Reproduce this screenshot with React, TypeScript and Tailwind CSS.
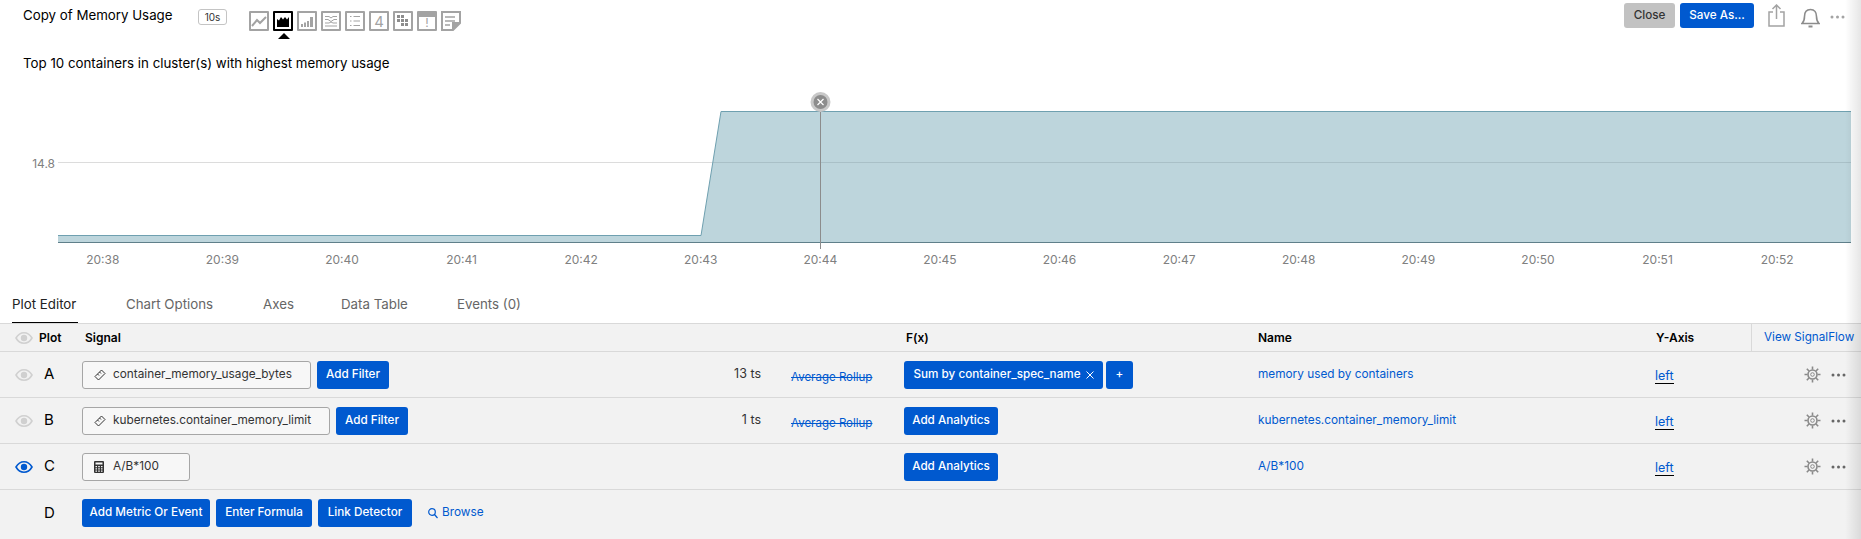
import { ReactNode } from "react";

const FONT = "font-['Inter','Liberation_Sans',sans-serif]";
const TIMES = ["20:38", "20:39", "20:40", "20:41", "20:42", "20:43", "20:44", "20:45", "20:46", "20:47", "20:48", "20:49", "20:50", "20:51", "20:52"];
const ROW_COLS = "grid grid-cols-[82px_679px_143px_354px_397px_96px_1fr] items-center";

function Btn({ children, className = "" }: { children: ReactNode; className?: string }) {
	return (
		<button className={`h-7 rounded-[3px] bg-[#0059cf] text-white text-[11.700px] font-medium whitespace-nowrap flex items-center justify-center ${className}`}>
			{children}
		</button>
	);
}

function ChartIcon({ children, active }: { children: ReactNode; active?: boolean }) {
	return (
		<div className={`w-5 h-5 border-2 rounded-[1px] flex items-center justify-center ${active ? "border-black" : "border-[#a3a3a3]"}`}>
			{children}
		</div>
	);
}

function ChartTypes() {
	return (
		<div className="flex gap-1 relative">
			<ChartIcon>
				<svg width="16" height="16" viewBox="0 0 16 16" fill="none" stroke="#a3a3a3" strokeWidth="2"><path d="M1 13l5-6 3 3 6-6" /></svg>
			</ChartIcon>
			<ChartIcon active>
				<svg width="16" height="16" viewBox="0 0 16 16" fill="#000"><path d="M2 14V6l2 1.500L6 4l2 2.500L10 4l2 2.500L14 4v10z" /></svg>
			</ChartIcon>
			<ChartIcon>
				<svg width="16" height="16" viewBox="0 0 16 16" fill="#a3a3a3"><path d="M2 11h2v3H2zM5 9.500h2V14H5zM8 8h2v6H8zM11 4h3v10h-3z" /></svg>
			</ChartIcon>
			<ChartIcon>
				<svg width="16" height="16" viewBox="0 0 16 16" fill="none" stroke="#a3a3a3" strokeWidth="1"><path d="M2 3.500h4l2 1.500 2-1.500h4M2 6.500h3l3 2 3-2h3M2 10h4l2-1 2 1h4M2 13h12" /></svg>
			</ChartIcon>
			<ChartIcon>
				<svg width="16" height="16" viewBox="0 0 16 16" fill="none" stroke="#a3a3a3" strokeWidth="1.200"><path d="M3 3.500h1.500M3 8h1.500M3 12.500h1.500M6.500 3.500H13M6.500 8H13M6.500 12.500H13" /></svg>
			</ChartIcon>
			<ChartIcon>
				<span className="text-[15px] leading-none text-[#a3a3a3]">4</span>
			</ChartIcon>
			<ChartIcon>
				<svg width="16" height="16" viewBox="0 0 16 16" fill="#8c8c8c"><path d="M2 2h3v3H2zM6 2h3v3H6zM2 6h3v3H2zM6 6h3v3H6zM10 6h3v3h-3zM6 10h3v3H6zM10 10h3v3h-3z" /></svg>
			</ChartIcon>
			<div className="w-5 h-5 border-2 border-[#a3a3a3] border-t-[6px] rounded-[1px] flex items-center justify-center">
				<span className="text-[12px] leading-none text-[#a3a3a3]">!</span>
			</div>
			<svg width="20" height="20" viewBox="0 0 20 20" fill="none" stroke="#a3a3a3" strokeWidth="2">
				<path d="M1 1h18v11l-7 7H1z" />
				<path d="M4 6h10M4 10h10M4 14h5" strokeWidth="1.500" />
				<path d="M12 19v-7h7" fill="#a3a3a3" />
			</svg>
			<div className="absolute left-[29px] top-[22px] w-0 h-0 border-x-[6px] border-x-transparent border-b-[6px] border-b-black" />
		</div>
	);
}

function Eye({ on }: { on?: boolean }) {
	const c = on ? "#0059cf" : "#d0d0d0";
	return (
		<svg width="18" height="14" viewBox="0 0 18 14" fill="none">
			<path d="M1 7c2-3.500 4.800-5.300 8-5.300S15 3.500 17 7c-2 3.500-4.800 5.300-8 5.300S3 10.500 1 7z" stroke={c} strokeWidth="1.600" />
			<circle cx="9" cy="7" r="3.200" fill={c} />
		</svg>
	);
}

function Gear() {
	return (
		<svg width="17" height="17" viewBox="0 0 17 17" fill="none" stroke="#8a8a8a">
			<circle cx="8.500" cy="8.500" r="4.500" strokeWidth="1.600" />
			<circle cx="8.500" cy="8.500" r="1.800" strokeWidth="1" />
			<path d="M8.500 0.500v3M8.500 13.500v3M0.500 8.500h3M13.500 8.500h3M2.800 2.800l2.200 2.200M12 12l2.200 2.200M14.200 2.800L12 5M5 12l-2.200 2.200" strokeWidth="1.600" />
		</svg>
	);
}

function Dots({ color = "#666" }: { color?: string }) {
	return (
		<svg width="15" height="4" viewBox="0 0 15 4" fill={color}>
			<circle cx="2" cy="2" r="1.500" />
			<circle cx="7.500" cy="2" r="1.500" />
			<circle cx="13" cy="2" r="1.500" />
		</svg>
	);
}

function Ruler() {
	return (
		<svg width="12" height="12" viewBox="0 0 12 12" fill="none" stroke="#333" strokeWidth="1">
			<path d="M1 7.500L7.500 1 11 4.500 4.500 11zM3.500 5l1.500 1.500M5.500 3l1.500 1.500" />
		</svg>
	);
}

function Calc() {
	return (
		<svg width="10" height="12" viewBox="0 0 10 12" fill="#333">
			<path d="M1 0h8a1 1 0 011 1v10a1 1 0 01-1 1H1a1 1 0 01-1-1V1a1 1 0 011-1zm.500 1.500v2h7v-2zm0 3.500v1.200h1.500V5zm2.700 0v1.200h1.600V5zm2.800 0v1.200h1.500V5zM1.500 7.300v1.200h1.500V7.300zm2.700 0v1.200h1.600V7.300zm2.800 0v1.200h1.500V7.300zM1.500 9.500v1.200h1.500V9.500zm2.700 0v1.200h1.600V9.500zm2.800 0v1.200h1.500V9.500z" />
		</svg>
	);
}

function SignalInput({ icon, label, width }: { icon: ReactNode; label: string; width: string }) {
	return (
		<div className={`h-7 ${width} shrink-0 border border-[#a6a6a6] rounded-[3px] bg-[#f7f7f7] flex items-center text-[11.800px] text-[#333]`}>
			<span className="w-[30px] pl-[11px] flex">{icon}</span>
			<span className="whitespace-nowrap">{label}</span>
		</div>
	);
}

function PlotRow({ letter, eye, signal, ts, fx, name }: { letter: string; eye?: boolean; signal: ReactNode; ts?: string; fx: ReactNode; name: string }) {
	return (
		<div className={`${ROW_COLS} h-[46px] border-b border-[#d9d9d9]`}>
			<div className="flex items-center pl-[15px]">
				<Eye on={eye} />
				<span className="ml-[11px] text-[15px] text-black">{letter}</span>
			</div>
			<div className="flex items-center justify-between">
				<div className="flex items-center gap-[6px]">{signal}</div>
				{ts && <span className="text-[12.500px] text-[#333]">{ts}</span>}
			</div>
			<div className="pl-[30px]">
				{ts && <span className="text-[11.500px] text-[#0059cf] line-through whitespace-nowrap">Average Rollup</span>}
			</div>
			<div className="flex items-center gap-[3px]">{fx}</div>
			<div className="text-[11.800px] text-[#0059cf]">{name}</div>
			<div className="-mt-[2px]">
				<span className="text-[12.500px] text-[#0059cf] border-b border-black leading-[15px] inline-block">left</span>
			</div>
			<div className="flex items-center pl-[53px] gap-[10px]">
				<Gear />
				<Dots />
			</div>
		</div>
	);
}

export default function App() {
	return (
		<div className={`relative w-full h-screen overflow-hidden bg-white flex flex-col text-black ${FONT}`}>
			{/* header */}
			<div className="h-[50px] shrink-0 flex items-start">
				<div className="w-[198px] pl-[23px] pt-[6px] text-[13.300px] whitespace-nowrap">Copy of Memory Usage</div>
				<div className="mt-[9px] w-[29px] h-4 border border-[#c4c4c4] rounded-[3px] text-[10px] text-[#333] flex items-center justify-center">10s</div>
				<div className="ml-[22px] mt-[11px]">
					<ChartTypes />
				</div>
				<div className="ml-auto flex items-center pt-[3px] pr-[16px]">
					<button className="w-[51px] h-[25px] rounded-[3px] bg-[#c2c2c2] text-[#333] text-[11.700px] font-medium">Close</button>
					<button className="ml-[5px] w-[74px] h-[25px] rounded-[3px] bg-[#0059cf] text-white text-[11.700px] font-medium">Save As...</button>
					<svg className="ml-[14px]" width="17" height="23" viewBox="0 0 17 23" fill="none" stroke="#a3a3a3" strokeWidth="1.500">
						<path d="M5 8H1v14h15V8h-4M8.500 15V1M4.500 5l4-4 4 4" />
					</svg>
					<svg className="ml-[16px] mt-[3px]" width="19" height="21" viewBox="0 0 19 21" fill="none" stroke="#8c8c8c" strokeWidth="1.600">
						<path d="M1 16.500h17c-2-2-2.500-4-2.500-7 0-4-2-7-6-7s-6 3-6 7c0 3-.5 5-2.500 7z" />
						<path d="M7.500 19.500h4" strokeWidth="2" />
					</svg>
					<span className="ml-[10px] mt-[3px] flex"><Dots color="#a3a3a3" /></span>
				</div>
			</div>

			<div className="h-[40px] shrink-0 pl-[23px] pt-[3px] text-[13.300px] leading-5">Top 10 containers in cluster(s) with highest memory usage</div>

			{/* chart */}
			<div className="flex h-[160px] shrink-0">
				<div className="w-[58px] shrink-0 flex items-center justify-end pr-[3px] pb-3 text-[12px] text-[#808080]">14.8</div>
				<svg width="1793" height="160" viewBox="0 0 1793 160" className="shrink-0">
					<path d="M0 145.500H643L663 21.500H1793V152.500H0z" fill="#bdd5dc" />
					<path d="M0 72.500H1793" stroke="#dcdcdc" />
					<path d="M655 72.500H1793" stroke="#a9c0c7" />
					<path d="M0 145.500H643L663 21.500H1793" fill="none" stroke="#6fa0b0" strokeWidth="1" />
					<path d="M0 152.500H1793" stroke="#5f7f8a" strokeWidth="1" />
					<path d="M762.500 12V159" stroke="#8c8c8c" />
					<circle cx="762.500" cy="12" r="10" fill="#c8c8c8" />
					<circle cx="762.500" cy="12" r="7" fill="#8c8c8c" />
					<path d="M759.500 9l6 6M765.500 9l-6 6" stroke="#fff" strokeWidth="1.200" />
				</svg>
			</div>

			<div className="h-[22px] shrink-0 flex pl-[43px] pt-[1px] text-[12px] text-[#808080]">
				{TIMES.map((t) => (
					<div key={t} className="w-[119.600px] text-center">{t}</div>
				))}
			</div>

			{/* tabs */}
			<div className="h-[51px] shrink-0 flex items-end pl-[12px] text-[13.300px] text-[#666]">
				<div className="h-[28px] w-[66px] border-b border-black text-[#222] whitespace-nowrap">Plot Editor</div>
				<div className="h-[28px] ml-[48px] w-[88px] whitespace-nowrap">Chart Options</div>
				<div className="h-[28px] ml-[49px] w-[30px]">Axes</div>
				<div className="h-[28px] ml-[48px] w-[67px] whitespace-nowrap">Data Table</div>
				<div className="h-[28px] ml-[49px] whitespace-nowrap">Events (0)</div>
			</div>

			{/* plot table */}
			<div className="flex-1 bg-[#f2f2f2] border-t border-[#d9d9d9]">
				<div className={`${ROW_COLS} h-[28px] border-b border-[#d9d9d9] text-[12px] font-semibold`}>
					<div className="flex items-center pl-[15px]">
						<Eye />
						<span className="ml-[6px]">Plot</span>
					</div>
					<div className="pl-[3px]">Signal</div>
					<div />
					<div className="pl-[2px]">F(x)</div>
					<div>Name</div>
					<div className="pl-[1px]">Y-Axis</div>
					<div className="h-full border-l border-[#d9d9d9] flex items-center pl-[12px] text-[#0059cf] text-[11.700px] font-normal whitespace-nowrap">View SignalFlow</div>
				</div>
				<PlotRow
					letter="A"
					signal={
						<>
							<SignalInput icon={<Ruler />} label="container_memory_usage_bytes" width="w-[229px]" />
							<Btn className="w-[72px]">Add Filter</Btn>
						</>
					}
					ts="13 ts"
					fx={
						<>
							<Btn className="w-[199px]">
								Sum by container_spec_name
								<svg className="ml-[5px]" width="8" height="8" viewBox="0 0 8 8" stroke="#fff" fill="none"><path d="M.5.500l7 7M7.500.500l-7 7" /></svg>
							</Btn>
							<Btn className="w-[27px]">+</Btn>
						</>
					}
					name="memory used by containers"
				/>
				<PlotRow
					letter="B"
					signal={
						<>
							<SignalInput icon={<Ruler />} label="kubernetes.container_memory_limit" width="w-[248px]" />
							<Btn className="w-[72px]">Add Filter</Btn>
						</>
					}
					ts="1 ts"
					fx={<Btn className="w-[94px]">Add Analytics</Btn>}
					name="kubernetes.container_memory_limit"
				/>
				<PlotRow
					letter="C"
					eye
					signal={<SignalInput icon={<Calc />} label="A/B*100" width="w-[108px]" />}
					fx={<Btn className="w-[94px]">Add Analytics</Btn>}
					name="A/B*100"
				/>
				<div className="flex items-center h-[46px]">
					<span className="w-[82px] pl-[44px] text-[15px]">D</span>
					<div className="flex items-center gap-[6px]">
						<Btn className="w-[128px]">Add Metric Or Event</Btn>
						<Btn className="w-[96px]">Enter Formula</Btn>
						<Btn className="w-[94px]">Link Detector</Btn>
					</div>
					<div className="ml-[16px] flex items-center gap-[4px] text-[11.800px] text-[#0059cf]">
						<svg width="10" height="11" viewBox="0 0 10 11" fill="none" stroke="#0059cf" strokeWidth="1.200">
							<circle cx="4" cy="4" r="3.300" />
							<path d="M6.500 6.500L9.500 10" />
						</svg>
						Browse
					</div>
				</div>
			</div>

			<div className="absolute top-0 right-0 bottom-0 w-[16px] pointer-events-none bg-gradient-to-r from-transparent to-black/10" />
		</div>
	);
}
